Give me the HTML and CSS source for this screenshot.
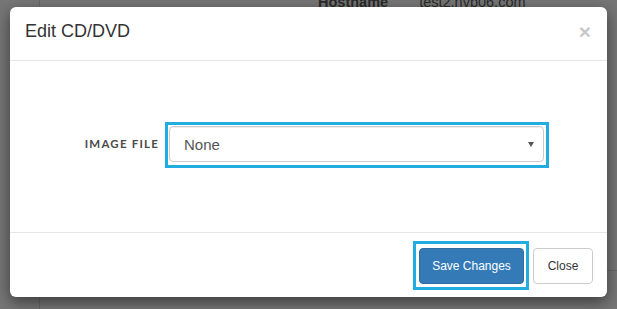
FILE: index.html
```html
<!DOCTYPE html>
<html>
<head>
<meta charset="utf-8">
<link rel="stylesheet" href="styles.css">
</head>
<body>
<div class="page">
  <div class="page-rule-v"></div>
  <div class="page-rule-h"></div>
  <div class="page-info">
    <span class="info-key">Hostname</span>
    <span class="info-val">test2.nvb06.com</span>
  </div>
</div>
<div class="modal">
  <div class="modal-header">
    <h4 class="modal-title">Edit CD/DVD</h4>
    <span class="close">×</span>
  </div>
  <div class="modal-body">
    <div class="form-row">
      <label class="form-label">IMAGE FILE</label>
      <div class="focus-ring ring-select">
        <div class="select">
          <span class="select-text">None</span>
          <span class="caret"></span>
        </div>
      </div>
    </div>
  </div>
  <div class="modal-footer">
    <div class="focus-ring ring-btn">
      <button class="btn btn-primary">Save Changes</button>
    </div>
    <button class="btn btn-default">Close</button>
  </div>
</div>
</body>
</html>
```
FILE: styles.css
```css
html, body {
  margin: 0;
  padding: 0;
}
body {
  width: 617px;
  height: 309px;
  overflow: hidden;
  position: relative;
  background: #767676;
  font-family: "Liberation Sans", Arial, sans-serif;
}
.page {
  position: absolute;
  inset: 0;
}
.page-rule-v {
  position: absolute;
  left: 39px;
  top: 0;
  width: 1px;
  height: 309px;
  background: #686868;
}
.page-rule-h {
  position: absolute;
  left: 600px;
  top: 270px;
  width: 17px;
  height: 1px;
  background: #686868;
}
.page-info {
  position: absolute;
  top: -5px;
  left: 318px;
  font-size: 14.5px;
  line-height: 1;
  color: #2b2b2b;
  white-space: nowrap;
}
.info-key {
  font-weight: bold;
  margin-right: 27px;
}
.modal {
  position: absolute;
  left: 10px;
  top: 7px;
  width: 597px;
  background: #fff;
  border-radius: 6px;
  box-shadow: 0 5px 15px rgba(0, 0, 0, 0.5);
}
.modal-header {
  display: flex;
  align-items: flex-start;
  justify-content: space-between;
  padding: 14px 16px 18px 15px;
  border-bottom: 1px solid #e5e5e5;
}
.modal-title {
  margin: 0;
  font-size: 18px;
  line-height: 20px;
  font-weight: normal;
  color: #333;
}
.close {
  font-size: 21px;
  font-weight: bold;
  line-height: 20px;
  color: #c8c8c8;
  margin-top: 1px;
}
.modal-body {
  padding: 61px 0 64px;
}
.form-row {
  display: flex;
  align-items: center;
}
.form-label {
  width: 149px;
  text-align: right;
  margin-right: 6px;
  font-family: Lato, "Liberation Sans", sans-serif;
  font-weight: bold;
  font-size: 11.5px;
  letter-spacing: 1.2px;
  color: #4a4a4a;
  margin-top: -3px;
}
.focus-ring {
  border: 3px solid #22acdf;
}
.ring-select {
  padding: 1px 2px 3px 1px;
}
.ring-btn {
  padding: 4px 2px 3px 3px;
}
.select {
  box-sizing: border-box;
  width: 375px;
  height: 36px;
  border: 1px solid #ccc;
  border-radius: 4px;
  box-shadow: inset 0 1px 1px rgba(0, 0, 0, 0.075);
  display: flex;
  align-items: center;
  justify-content: space-between;
  padding: 0 9px 0 14px;
}
.select-text {
  font-size: 15px;
  color: #555;
}
.caret {
  width: 0;
  height: 0;
  border-left: 3px solid transparent;
  border-right: 3px solid transparent;
  border-top: 5px solid #555;
  margin-top: 1px;
}
.modal-footer {
  display: flex;
  align-items: center;
  justify-content: flex-end;
  padding: 8px 14px 7px;
  border-top: 1px solid #e5e5e5;
}
.btn {
  box-sizing: border-box;
  height: 36px;
  font-family: "Liberation Sans", Arial, sans-serif;
  font-size: 12px;
  border-radius: 4px;
  border: 1px solid transparent;
  padding: 0 12px;
  margin: 0;
  display: block;
}
.btn-primary {
  width: 105px;
  background: #337ab7;
  border-color: #2e6da4;
  color: #fff;
}
.btn-default {
  width: 60px;
  margin-left: 4px;
  background: #fff;
  border-color: #ccc;
  color: #333;
}
```
